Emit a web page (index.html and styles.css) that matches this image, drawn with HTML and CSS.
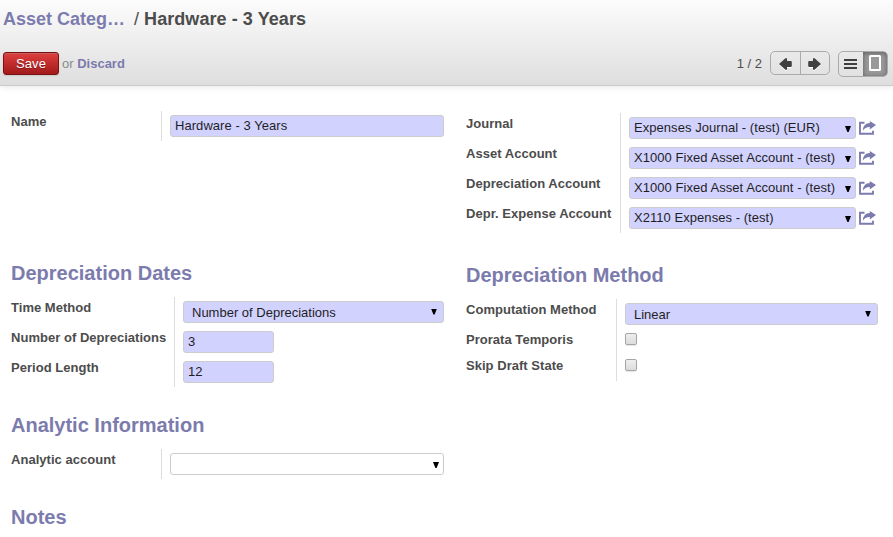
FILE: index.html
```html
<!DOCTYPE html>
<html lang="en">
<head>
<meta charset="utf-8">
<title>Hardware - 3 Years</title>
<link rel="stylesheet" href="styles.css">
</head>
<body>
<svg class="defs" width="0" height="0">
  <symbol id="share" viewBox="0 0 17 14">
    <path d="M5.500 1.800H1V12.800H14V9.800" fill="none" stroke="currentColor" stroke-width="1.900"/>
    <path d="M10.800 0L17 4L10.800 8.500V6C7.800 5.900 5.600 7 3.800 9.800C4 5 6.500 2.300 10.800 2.100Z" fill="currentColor"/>
  </symbol>
  <symbol id="arrow" viewBox="0 0 13 12">
    <path d="M0 6L6.500 0.300H8V3.100H11.800Q12.800 3.100 12.800 4.100V7.900Q12.800 8.900 11.800 8.900H8V11.700H6.500Z" fill="currentColor"/>
  </symbol>
</svg>
<header class="header">
  <h1 class="crumbs"><a>Asset Categ…</a><span class="sep">/</span><span class="current">Hardware - 3 Years</span></h1>
  <div class="toolbar">
    <button class="save">Save</button>
    <span class="or">or <a>Discard</a></span>
    <span class="count">1 / 2</span>
    <div class="pager">
      <span><svg width="13" height="12"><use href="#arrow"/></svg></span>
      <span><svg class="flip" width="13" height="12"><use href="#arrow"/></svg></span>
    </div>
    <div class="views">
      <span><svg width="13" height="10" viewBox="0 0 13 10"><path d="M0 1H13M0 5H13M0 9H13" stroke="#404040" stroke-width="2"/></svg></span>
      <span class="active"><svg width="12" height="16" viewBox="0 0 12 16"><rect x="1" y="1" width="10" height="14" rx=".5" fill="none" stroke="#fff" stroke-width="2"/></svg></span>
    </div>
  </div>
</header>
<main class="sheet">
  <div class="col left">
    <section class="group name">
      <div class="labels"><label>Name</label></div>
      <div class="fields"><div class="row"><div class="input">Hardware - 3 Years</div></div></div>
    </section>
    <h2>Depreciation Dates</h2>
    <section class="group dates">
      <div class="labels"><label>Time Method</label><label>Number of Depreciations</label><label>Period Length</label></div>
      <div class="fields">
        <div class="row"><div class="input select native">Number of Depreciations</div></div>
        <div class="row"><div class="input short">3</div></div>
        <div class="row"><div class="input short">12</div></div>
      </div>
    </section>
    <h2>Analytic Information</h2>
    <section class="group analytic">
      <div class="labels"><label>Analytic account</label></div>
      <div class="fields"><div class="row"><div class="input select optional"></div></div></div>
    </section>
    <h2>Notes</h2>
  </div>
  <div class="col right">
    <section class="group accounts">
      <div class="labels"><label>Journal</label><label>Asset Account</label><label>Depreciation Account</label><label>Depr. Expense Account</label></div>
      <div class="fields">
        <div class="row"><div class="input select">Expenses Journal - (test) (EUR)</div><svg class="share"><use href="#share"/></svg></div>
        <div class="row"><div class="input select">X1000 Fixed Asset Account - (test)</div><svg class="share"><use href="#share"/></svg></div>
        <div class="row"><div class="input select">X1000 Fixed Asset Account - (test)</div><svg class="share"><use href="#share"/></svg></div>
        <div class="row"><div class="input select">X2110 Expenses - (test)</div><svg class="share"><use href="#share"/></svg></div>
      </div>
    </section>
    <h2>Depreciation Method</h2>
    <section class="group method">
      <div class="labels"><label>Computation Method</label><label class="tight">Prorata Temporis</label><label class="tight">Skip Draft State</label></div>
      <div class="fields">
        <div class="row"><div class="input select native">Linear</div></div>
        <div class="row tight"><span class="check"></span></div>
        <div class="row tight"><span class="check"></span></div>
      </div>
    </section>
  </div>
</main>
</body>
</html>
```
FILE: styles.css
```css
* { box-sizing: border-box; }
body {
  margin: 0;
  height: 537px;
  overflow: hidden;
  background: #fff;
  color: #4c4c4c;
  font: 13px/22px "Liberation Sans", Arial, sans-serif;
}
.defs { position: absolute; }
svg { display: block; }
a, h2 { color: #7c7bad; }
.header {
  height: 86px;
  padding: 8px 5px 0 3px;
  background: linear-gradient(#fcfcfc, #dedede);
  border-bottom: 1px solid #cacaca;
  box-shadow: 0 1px 6px rgba(0, 0, 0, .1);
}
.crumbs { margin: 0; height: 43px; font-size: 18px; line-height: 22px; white-space: pre; }
.current { letter-spacing: .07px; }
.sep { margin: 0 5px 0 9px; font-weight: normal; }
.toolbar { display: flex; align-items: flex-start; height: 26px; line-height: 25px; }
.save {
  width: 56px;
  height: 23px;
  margin-top: 1px;
  padding: 0;
  border: 1px solid #7a1010;
  border-radius: 3px;
  background: linear-gradient(#df3f3f, #a21a1a);
  box-shadow: 0 1px 2px rgba(0, 0, 0, .1), 0 1px 1px rgba(155, 155, 155, .4) inset;
  color: #fff;
  font: 13px/21px "Liberation Sans", Arial, sans-serif;
  letter-spacing: .15px;
  text-shadow: 0 1px 1px rgba(0, 0, 0, .3);
}
.or { margin-left: 3px; color: #8a8a8a; }
.or a { font-weight: bold; }
.count { margin-left: auto; }
.pager, .views { display: flex; margin-left: 8px; border: 1px solid #ababab; border-radius: 5px; overflow: hidden; color: #404040; }
.pager { width: 60px; height: 24px; }
.views { width: 50px; height: 26px; }
.pager span, .views span { flex: 1; display: flex; align-items: center; justify-content: center; }
.pager span { padding-top: 2px; }
.pager span + span { border-left: 1px solid #ababab; }
.pager svg { filter: drop-shadow(0 1px 0 #fff); }
.views span { flex: none; width: 24px; padding-right: 1px; }
.views .active { width: 24px; background: #999; box-shadow: inset 0 1px 5px rgba(0, 0, 0, .4); padding: 0 0 2px; }
.flip { transform: scaleX(-1); }
.sheet { display: flex; gap: 22px; padding: 25px 15px 0 11px; }
.left { width: 433px; }
.right { width: 412px; padding-top: 2px; }
h2 { margin: 0; font-size: 20px; line-height: 24px; height: 36px; }
.group { display: flex; }
.labels { flex: none; }
.fields { flex: 1; padding-left: 8px; border-left: 1px solid #ddd; }
label { display: block; height: 30px; font-weight: bold; white-space: nowrap; letter-spacing: .03px; }
.row { display: flex; height: 30px; padding-top: 4px; }
label.tight, .row.tight { height: 26px; }
.input {
  flex: 1;
  height: 22px;
  padding: 0 4px;
  border: 1px solid #ccc;
  border-radius: 3px;
  background: #d2d2ff;
  color: #1f1f1f;
  line-height: 20px;
  letter-spacing: .05px;
  white-space: nowrap;
}
.native { letter-spacing: 0; }
.select { display: flex; justify-content: space-between; align-items: center; padding-right: 4px; }
.select::after {
  content: "";
  width: 6px;
  height: 6px;
  margin-top: 2px;
  background: #000;
  clip-path: polygon(0 0, 100% 0, 60% 100%, 40% 100%);
}
.native { padding: 1px 6px 0 8px; }
.native::after { margin-top: -2px; }
.optional { background: #fff; }
.optional::after { margin-left: auto; }
.short { flex: none; width: 91px; }
.share { flex: none; width: 17px; height: 14px; margin: 4px 2px 0 3px; color: #7c7bad; }
.check {
  width: 12px;
  height: 12px;
  border: 1px solid #a5a5a5;
  border-radius: 2px;
  background: linear-gradient(#eee, #dcdcdc);
  box-shadow: 0 1px 1px rgba(0, 0, 0, .1);
}
.name { height: 150px; }
.name .labels, .analytic .labels { width: 150px; }
.name .fields, .analytic .fields { height: 30px; }
.dates { height: 116px; }
.dates .labels { width: 163px; }
.dates .fields { height: 90px; }
.analytic { height: 56px; }
.accounts { height: 150px; }
.accounts .labels { width: 154px; }
.accounts .fields { height: 120px; }
.method .labels { width: 150px; }
.method .fields { height: 82px; }
```
